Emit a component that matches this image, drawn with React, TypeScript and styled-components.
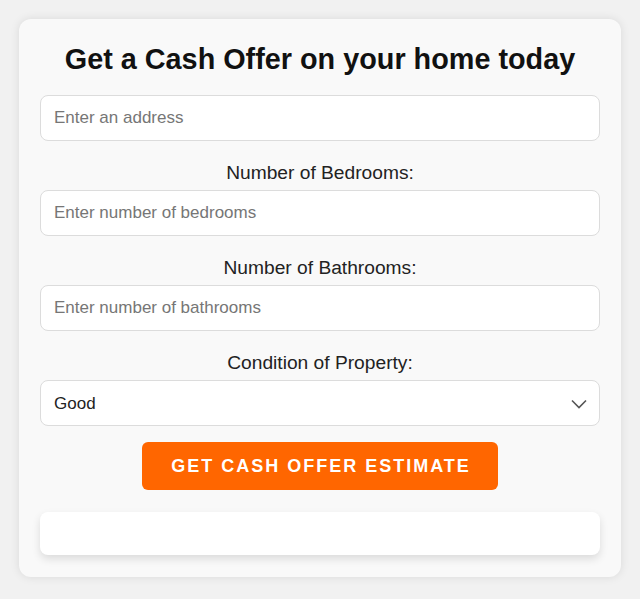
import styled, { createGlobalStyle } from 'styled-components';

const GlobalStyle = createGlobalStyle`
    html,
    body {
        margin: 0;
        padding: 0;
        background: #f1f1f1;
        font-family: 'Liberation Sans', Arial, sans-serif;
    }
`;

const Page = styled.div`
    padding: 19px;
`;

const Card = styled.form`
    display: flex;
    flex-direction: column;
    padding: 24px 21px 22px;
    border-radius: 12px;
    background: #f9f9f9;
    box-shadow: 0 0 10px rgba(0, 0, 0, 0.1);
`;

const Title = styled.h2`
    margin: 0 0 19px;
    font-size: 28.8px;
    line-height: 33px;
    font-weight: 700;
    color: #111;
    text-align: center;
`;

const Label = styled.label`
    display: block;
    margin: 21px 0 6px;
    font-size: 19.2px;
    line-height: 22px;
    color: #222;
    text-align: center;
`;

const fieldBase = `
    box-sizing: border-box;
    width: 100%;
    height: 46px;
    padding: 0 13px;
    border: 1px solid #dcdcdc;
    border-radius: 8px;
    background: #fff;
    font-family: 'Liberation Sans', Arial, sans-serif;
    font-size: 17px;
    color: #222;
    outline: none;
`;

const Input = styled.input`
    ${fieldBase}

    &::placeholder {
        color: #767676;
    }
`;

const SelectWrap = styled.div`
    position: relative;
`;

const Select = styled.select`
    ${fieldBase}
    appearance: none;
    cursor: pointer;
`;

const Chevron = styled.svg`
    position: absolute;
    top: 19px;
    right: 13px;
    pointer-events: none;
`;

const SubmitButton = styled.button`
    align-self: center;
    margin-top: 16px;
    height: 48px;
    padding: 0 27px 0 29px;
    border: none;
    border-radius: 6px;
    background: #ff6600;
    color: #fff;
    font-family: 'Liberation Sans', Arial, sans-serif;
    font-size: 18px;
    font-weight: 700;
    letter-spacing: 2px;
    text-transform: uppercase;
    cursor: pointer;
`;

const Result = styled.div`
    margin-top: 22px;
    height: 43px;
    border-radius: 8px;
    background: #fff;
    box-shadow: 0 4px 9px rgba(0, 0, 0, 0.12);
`;

export default function App() {
    return (
        <Page>
            <GlobalStyle />
            <Card onSubmit={(e) => e.preventDefault()}>
                <Title>Get a Cash Offer on your home today</Title>
                <Input type="text" placeholder="Enter an address" />

                <Label htmlFor="bedrooms">Number of Bedrooms:</Label>
                <Input id="bedrooms" type="number" placeholder="Enter number of bedrooms" />

                <Label htmlFor="bathrooms">Number of Bathrooms:</Label>
                <Input id="bathrooms" type="number" placeholder="Enter number of bathrooms" />

                <Label htmlFor="condition">Condition of Property:</Label>
                <SelectWrap>
                    <Select id="condition" defaultValue="good">
                        <option value="excellent">Excellent</option>
                        <option value="good">Good</option>
                        <option value="fair">Fair</option>
                        <option value="poor">Poor</option>
                    </Select>
                    <Chevron width="16" height="10" viewBox="0 0 16 10" fill="none">
                        <path d="M1 1.5 L8 8.5 L15 1.5" stroke="#555" strokeWidth="1.6" />
                    </Chevron>
                </SelectWrap>

                <SubmitButton type="submit">Get Cash Offer Estimate</SubmitButton>
                <Result />
            </Card>
        </Page>
    );
}
